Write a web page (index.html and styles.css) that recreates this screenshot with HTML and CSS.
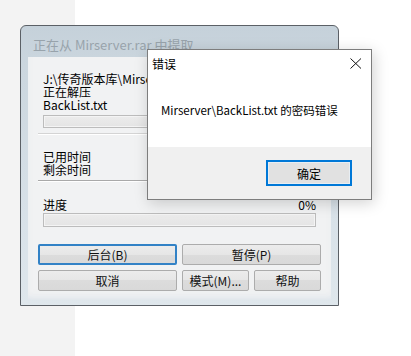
FILE: index.html
```html
<!DOCTYPE html>
<html lang="zh-CN">
<head>
<meta charset="utf-8">
<title>正在从 Mirserver.rar 中提取</title>
<link rel="stylesheet" href="styles.css">
</head>
<body>
<div class="desktop">
  <div class="win">
    <div class="win-title">正在从 Mirserver.rar 中提取</div>
    <div class="client">
      <div class="info">
        <div class="line">J:\传奇版本库\Mirserver\BackList.txt</div>
        <div class="line">正在解压</div>
        <div class="line">BackList.txt</div>
      </div>
      <div class="bar bar-file"></div>
      <div class="sep sep-light"></div>
      <div class="times">
        <div class="line">已用时间</div>
        <div class="line">剩余时间</div>
      </div>
      <div class="sep"></div>
      <div class="progress-row">
        <span>进度</span>
        <span>0%</span>
      </div>
      <div class="bar bar-total"></div>
      <div class="btn-row">
        <button class="btn btn-focus">后台(B)</button>
        <button class="btn">暂停(P)</button>
      </div>
      <div class="btn-row btn-row-2">
        <button class="btn">取消</button>
        <div class="btn-pair">
          <button class="btn">模式(M)...</button>
          <button class="btn">帮助</button>
        </div>
      </div>
    </div>
  </div>

  <div class="dlg">
    <div class="dlg-title">
      <span>错误</span>
      <svg class="dlg-close" width="12" height="11" viewBox="0 0 12 11">
        <path d="M0.5 0.5 L11 10.5 M11 0.5 L0.5 10.5" stroke="#111" stroke-width="1" fill="none"/>
      </svg>
    </div>
    <div class="dlg-body">Mirserver\BackList.txt 的密码错误</div>
    <div class="dlg-foot">
      <button class="dlg-btn">确定</button>
    </div>
  </div>
</div>
</body>
</html>
```

FILE: styles.css
```css
* { box-sizing: border-box; }

html, body {
  margin: 0;
  padding: 0;
}

body {
  width: 411px;
  height: 356px;
  overflow: hidden;
  font-family: "Noto Sans CJK SC", "Noto Sans", sans-serif;
  font-size: 12px;
  color: #000;
}

.desktop {
  position: relative;
  width: 411px;
  height: 356px;
  background: linear-gradient(to right, #f3f3f3 0, #f3f3f3 75px, #ffffff 75px);
}

/* main extraction window */
.win {
  position: absolute;
  left: 20px;
  top: 25px;
  width: 319px;
  height: 281px;
  border: 1px solid #5b6066;
  border-radius: 6px 6px 0 0;
  background: linear-gradient(to bottom, #c5d1da 0, #cbd6de 40px, #d9e2e9 200px, #dfe7ec 100%);
  display: flex;
  flex-direction: column;
}

.win-title {
  height: 31px;
  padding: 10px 12px 0;
  line-height: 17px;
  font-size: 13px;
  color: #98a3ab;
  white-space: nowrap;
}

.client {
  margin: 0 7px 4px;
  height: 243px;
  padding: 15px 10px 9px;
  background: #f1f2f3;
  box-shadow: inset 0 -6px 10px -6px rgba(180, 200, 220, 0.5);
}

.info, .times {
  padding: 0 5px;
}

.line {
  line-height: 13px;
  white-space: nowrap;
}

.bar {
  margin: 0 5px;
  border: 1px solid #bcbcbc;
  background: linear-gradient(to bottom, #ececec, #e4e4e4);
  box-shadow: inset 0 0 0 1px #f4f4f4;
}

.bar-file {
  margin-top: 4px;
  height: 13px;
}

.bar-total {
  margin-top: 2px;
  height: 14px;
}

.sep {
  margin-top: 4px;
  height: 2px;
  border-top: 1px solid #a9a9a9;
  border-bottom: 1px solid #ffffff;
}

.sep-light {
  margin-top: 5px;
  border-top-color: #d4d4d4;
}

.times {
  margin-top: 15px;
}

.progress-row {
  margin-top: 16px;
  padding: 0 5px;
  height: 13px;
  line-height: 13px;
  display: flex;
  justify-content: space-between;
}

.btn-row {
  margin-top: 17px;
  display: grid;
  grid-template-columns: 1fr 1fr;
  column-gap: 5px;
  height: 21px;
}

.btn-row-2 {
  margin-top: 5px;
}

.btn-pair {
  display: grid;
  grid-template-columns: 1fr 1fr;
  column-gap: 5px;
}

.btn {
  font: inherit;
  font-size: 12px;
  color: #111;
  height: 21px;
  padding: 0;
  border: 1px solid #acacac;
  border-radius: 2px;
  background: linear-gradient(to bottom, #ececec 0, #e6e6e6 50%, #dcdcdc 50%, #d9d9d9 100%);
  line-height: 17px;
  white-space: nowrap;
}

.btn-focus {
  border: 2px solid #3282c6;
  line-height: 15px;
}

/* error dialog */
.dlg {
  position: absolute;
  left: 147px;
  top: 49px;
  width: 225px;
  height: 151px;
  border: 1px solid #7d7d7d;
  background: #ffffff;
  box-shadow: 2px 3px 14px rgba(0, 0, 0, 0.18);
  display: flex;
  flex-direction: column;
}

.dlg-title {
  height: 29px;
  padding: 6px 0 0 4px;
  line-height: 15px;
  display: flex;
  justify-content: space-between;
  align-items: flex-start;
}

.dlg-close {
  margin: 2px 9px 0 0;
}

.dlg-body {
  height: 68px;
  padding: 24px 0 0 13px;
  line-height: 15px;
  font-size: 11.5px;
  white-space: nowrap;
}

.dlg-foot {
  flex: 1;
  background: #f0f0f0;
  display: flex;
  justify-content: flex-end;
  align-items: flex-start;
  padding: 13px 19px 0 0;
}

.dlg-btn {
  font: inherit;
  font-size: 12px;
  width: 86px;
  height: 26px;
  padding: 0;
  border: 2px solid #0078d7;
  background: #e1e1e1;
  box-shadow: inset 0 0 0 1px #e8eef3;
  color: #000;
}
```
